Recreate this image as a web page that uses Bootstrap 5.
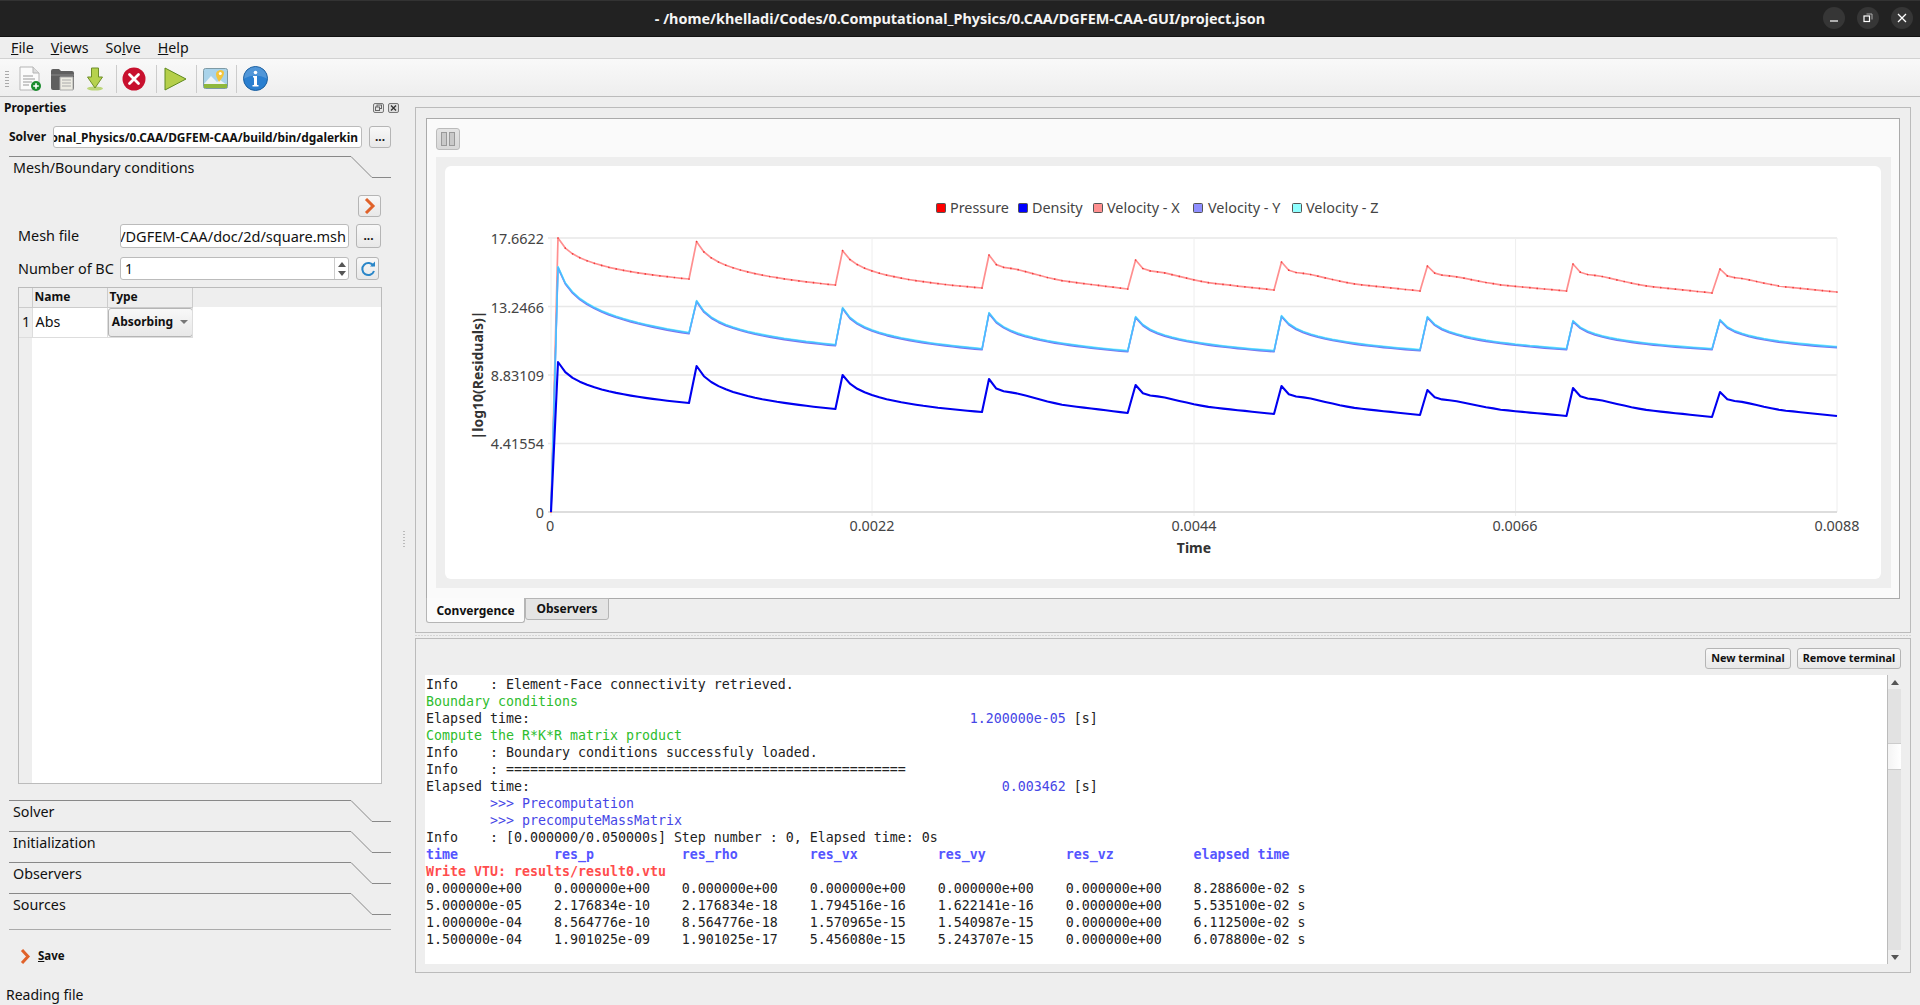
<!doctype html>
<html lang="en">
<head>
<meta charset="utf-8">
<title>DGFEM-CAA-GUI</title>
<link rel="stylesheet" href="https://cdn.jsdelivr.net/npm/bootstrap@5.3.0/dist/css/bootstrap.min.css">
<style>
html,body{height:1005px;overflow:hidden}
body{background:#eee;color:#111;font-family:"Noto Sans","Open Sans",sans-serif;font-size:13.5px;line-height:20px}
.titlebar{height:37px;background:#222;border-top:1px solid #333;border-bottom:1px solid #111;color:#f4f4f4;font-weight:700;font-size:14.4px;position:relative}
.winbtn{width:22px;height:22px;border-radius:50%;background:#363636;margin-left:12px}
.winbtns{position:absolute;right:7px;top:6px}
.menubar{height:22px;border-bottom:1px solid #d2d2d2;padding-left:11px;font-size:14.2px}
.menubar span{margin-right:17px}
.toolbar{height:38px;padding-top:2px;background:linear-gradient(#f9f9f9,#eee);border-bottom:1px solid #bbb}
.grip{width:4px;height:18px;margin:0 4px 0 5px;background-image:radial-gradient(#aaa 40%,transparent 45%);background-size:2px 3px}
.tcell{width:33px}
.tshift{margin-left:-1px;margin-right:1px}
.tshift2{margin-left:-2px;margin-right:2px}
.tsep{width:1px;height:28px;background:#ccc;margin:0 2px 0 4px}
.mainarea{height:888px}
.leftpanel{width:415px;flex:none}
.proptitle{height:22px;padding-left:4px;padding-right:16px;font-weight:700;font-size:12px}
.solverrow{margin:7px 24px 0 9px;height:22px;font-weight:700;font-size:12px}
.qfield{background:#fff;border:1px solid #bbb;border-radius:3px;overflow:hidden;white-space:nowrap;padding:0 3px;display:flex;align-items:center;justify-content:flex-end}
.qbtn{background:linear-gradient(#f8f8f8,#e8e8e8);border:1px solid #b5b5b5;border-radius:3px;padding:0;color:#111;font-weight:700;font-size:12px;line-height:1;--bs-btn-hover-bg:#eee}
.w-solverin{width:309px;margin-left:7px;font-size:11.9px}
.w-dots{width:22px;margin-left:7px}
.tbox{margin:8px 24px 0 9px}
.tabhead{height:22px}
.tabhead .htext{flex:1;border-top:1px solid #888;padding:1px 0 0 4px;font-size:14.3px;line-height:20px}
.tabhead svg{flex:none}
.tabgap{margin-top:9px}
.tabpage{height:622px;padding:17px 9px 0}
.arrowbtn{width:23px;height:22px;margin-right:1px}
.formrow{margin-top:7px;height:24px;font-size:14.4px}
.formrow.second{margin-top:9px;height:23px}
.flabel{width:102px;flex:none}
.meshin{width:229px;font-size:14.5px;padding:0 2px}
.spinin{width:229px;justify-content:space-between;padding:0 0 0 4px;font-size:14px}
.spinarrows{width:14px;height:100%;border-left:1px solid #ccc}
.smallbtn{width:25px;margin-left:7px;height:24px}
.refbtn{width:23px;height:23px;margin-left:7px}
.bctable{margin-top:7px;height:497px;border:1px solid #bbb;background:linear-gradient(to right,#eee 13px,#fff 13px)}
.bctable table{width:100%;border-collapse:collapse;table-layout:fixed}
.col-rn{width:13px}
.col-name{width:75px}
.col-type{width:85px}
.bctable thead tr{background:#eee;height:19px;font-size:12px;font-weight:700}
.bctable tbody tr{height:29px;font-size:14.3px;background:transparent}
.bctable th{padding:0 2px;border-right:1px solid #ccc;border-bottom:1px solid #ccc;line-height:16px}
.bctable th.blank{border:0}
.bctable td{padding:0 3px;background:#fff;border-right:1px solid #ddd;border-bottom:1px solid #ddd}
.bctable td.rnum{background:#eee;padding:0 0 0 3px}
.bctable td.blank{border:0;background:#fff}
.bctable td.combocell{padding:0}
.combo{width:85px;height:29px;font-size:12px;font-weight:700;display:flex;align-items:center;justify-content:center;gap:7px}
.caret{width:0;height:0;border:4px solid transparent;border-top:4px solid #777;border-bottom:0}
.endline{margin-top:14px;border-top:1px solid #aaa;height:1px}
.saverow{margin:16px 0 0 11px;font-weight:700;font-size:11.5px;height:20px}
.saverow u{text-decoration-thickness:1px}
.saverow svg{margin-right:-1px}
.rightpanel{width:1496px;padding-top:10px}
.framebox{border:1px solid #bbb}
.topframe{height:526px;padding:10px 10px 0}
.pane{height:481px;border:1px solid #aaa;background:#fafafa;padding:9px 8px 9px 9px}
.pausebtn{width:24px;height:22px;background:linear-gradient(#e4e4e4,#d8d8d8);border:1px solid #bbb;border-radius:3px;margin-bottom:7px}
.chartbox{background:#eee;padding:9px 10px 9px 9px;height:431px}
.chartcard{background:#fff;border-radius:6px;height:413px;overflow:hidden}
.chartcard svg{display:block}
.chartcard text{font-family:"Noto Sans","Open Sans",sans-serif;font-size:14.4px;fill:#444}
.chartcard text.axt{font-weight:700;fill:#333;font-size:14px}
.chartcard .gridl{stroke:#e8e8e8;stroke-width:1.5}
.chartcard .gridv{stroke:#eee;stroke-width:1}
.qtabs{border:0;font-size:12px;font-weight:700;--bs-nav-tabs-border-width:0;margin-top:-1px;align-items:flex-start}
.qtab{height:22px;width:84px;margin-left:0;background:#e4e4e4;border:1px solid #b5b5b5;border-radius:0 0 3px 3px;display:flex;align-items:center;justify-content:center}
.qtab.on{background:#fbfbfb;width:99px;height:25px;border-top:0;padding-top:2px}
.hsplit{height:5px;background-image:radial-gradient(#bbb 30%,transparent 35%);background-size:3px 3px;background-repeat:repeat-x;background-position:center}
.botframe{height:335px;padding:9px 9px 8px}
.termbtn{height:21px;font-size:10.8px;margin-left:6px}
.w-new{width:86px}
.w-rem{width:104px}
.termrow{margin-top:6px;height:289px}
.termtext{flex:1;background:#fff;margin:0;padding:1px 0 0 1px;overflow:hidden;font-family:"DejaVu Sans Mono","Liberation Mono",monospace;font-size:13.29px;line-height:17px;color:#222}
.cg{color:#2ebd2e}.cb{color:#4646e6}.cbb{color:#5555ff;font-weight:700}.cr{color:#ff4d4d;font-weight:700}
.sbar{width:14px;flex:none;background:#e2e2e2;border-left:1px solid #bbb}
.sbarbtn{height:14px;background:#eee;display:flex;align-items:center;justify-content:center}
.sup{width:0;height:0;border:4px solid transparent;border-bottom:5px solid #555;border-top:0}
.sdn{width:0;height:0;border:4px solid transparent;border-top:5px solid #555;border-bottom:0}
.sthumb{margin-top:54px;height:27px;background:linear-gradient(to right,#f4f4f4,#fff);border-top:1px solid #ccc;border-bottom:1px solid #ccc}
.statusbar{height:20px;padding-left:6px;font-size:14px;line-height:20px}
.vgrip{position:absolute;left:403px;top:530px;width:2px;height:18px;background-image:radial-gradient(#bbb 40%,transparent 45%);background-size:2px 3px}
</style>
</head>
<body class="d-flex flex-column">

<div class="titlebar d-flex align-items-center justify-content-center flex-none">
  <span>- /home/khelladi/Codes/0.Computational_Physics/0.CAA/DGFEM-CAA-GUI/project.json</span>
  <div class="winbtns d-flex">
    <div class="winbtn d-flex align-items-center justify-content-center"><svg width="10" height="10" viewBox="0 0 10 10"><path d="M1 8h8" stroke="#fff" stroke-width="1.2"/></svg></div>
    <div class="winbtn d-flex align-items-center justify-content-center"><svg width="10" height="10" viewBox="0 0 10 10"><rect x="1" y="3" width="5.5" height="5.5" fill="none" stroke="#fff" stroke-width="1.2"/><path d="M3.5 1H9v5.5" fill="none" stroke="#aaa"/></svg></div>
    <div class="winbtn d-flex align-items-center justify-content-center"><svg width="10" height="10" viewBox="0 0 10 10"><path d="M1 1l8 8M9 1l-8 8" stroke="#fff" stroke-width="1.3"/></svg></div>
  </div>
</div>

<div class="menubar d-flex align-items-center">
  <span><u>F</u>ile</span><span><u>V</u>iews</span><span>So<u>l</u>ve</span><span><u>H</u>elp</span>
</div>

<div class="toolbar d-flex align-items-center">
  <div class="grip"></div>
  <div class="tcell d-flex justify-content-center"><svg width="24" height="26" viewBox="0 0 24 26"><path d="M2 1h13l6 6v17H2z" fill="#fbfbfb" stroke="#b5b5b5"/><path d="M15 1v6h6" fill="#ddd" stroke="#b5b5b5"/><path d="M5 10h10M5 13h12M5 16h9M5 19h6" stroke="#999"/><circle cx="18" cy="20" r="5" fill="#1a8c2e"/><path d="M18 17.2v5.6M15.2 20h5.6" stroke="#fff" stroke-width="1.6"/></svg></div>
  <div class="tcell d-flex justify-content-center"><svg width="25" height="24" viewBox="0 0 25 24"><path d="M1 4q0-2 2-2h6l2 2h11q2 0 2 2v15q0 2-2 2H3q-2 0-2-2z" fill="#5f5f5f"/><path d="M1 8h23" stroke="#888"/><path d="M10 10h13v13H10z" fill="#ecebe2" stroke="#aaa"/><path d="M12 13h9M12 16h9M12 19h9" stroke="#aaa"/></svg></div>
  <div class="tcell tshift d-flex justify-content-center"><svg width="18" height="24" viewBox="0 0 18 24"><ellipse cx="9" cy="21.5" rx="8" ry="2" fill="#bcd67a"/><path d="M5.5 1h7v9h4L9 21 1.5 10h4z" fill="#b6d24e" stroke="#6f8f2a"/></svg></div>
  <div class="tsep"></div>
  <div class="tcell tshift2 d-flex justify-content-center"><svg width="24" height="24" viewBox="0 0 24 24"><circle cx="12" cy="12" r="11.5" fill="#c8102e"/><path d="M7.5 7.5l9 9M16.5 7.5l-9 9" stroke="#fff" stroke-width="2.8" stroke-linecap="round"/></svg></div>
  <div class="tsep"></div>
  <div class="tcell d-flex justify-content-center"><svg width="23" height="24" viewBox="0 0 23 24"><path d="M1 1l21 11L1 23z" fill="#b5cf4a" stroke="#5f8a1e"/></svg></div>
  <div class="tsep"></div>
  <div class="tcell d-flex justify-content-center"><svg width="25" height="21" viewBox="0 0 25 21"><rect x=".5" y=".5" width="24" height="20" rx="2" fill="#a9d3ea" stroke="#7e9aa5"/><path d="M1 16l7-8 6 6 3-2 7 5v3H1z" fill="#eef3f5"/><rect x="1" y="16" width="23" height="4" fill="#8fb83c"/><path d="M17 2q4 0 4 3t-5 9q-3-5-3-8t4-4z" fill="#f3c53c"/><circle cx="17.3" cy="5.6" r="1.5" fill="#fff"/></svg></div>
  <div class="tsep"></div>
  <div class="tcell d-flex justify-content-center"><svg width="25" height="25" viewBox="0 0 25 25"><circle cx="12.5" cy="12.5" r="12" fill="#2a7fd0" stroke="#1b5f9f"/><path d="M1 12.5a11.5 11.5 0 0 1 23 0q-11.5-6-23 0z" fill="#fff" opacity=".18"/><circle cx="12.5" cy="6.5" r="1.8" fill="#fff"/><path d="M10 10h4v9h1.5v1.5h-6V19H11v-7.5h-1z" fill="#fff"/></svg></div>
</div>

<div class="mainarea d-flex">
  <div class="leftpanel">
    <div class="proptitle d-flex align-items-center justify-content-between">
      <span>Properties</span>
      <span class="d-flex gap-1">
        <svg width="11" height="10" viewBox="0 0 11 10"><rect x=".5" y=".5" width="10" height="9" rx="1.5" fill="#e4e4e4" stroke="#777"/><rect x="4" y="2" width="4.5" height="3.5" fill="none" stroke="#666"/><rect x="2.5" y="4" width="4" height="3.5" fill="#e4e4e4" stroke="#666"/></svg>
        <svg width="11" height="10" viewBox="0 0 11 10"><rect x=".5" y=".5" width="10" height="9" rx="1.5" fill="#ddd" stroke="#777"/><path d="M3 2.5l5 5M8 2.5l-5 5" stroke="#333" stroke-width="1.3"/></svg>
      </span>
    </div>
    <div class="solverrow d-flex align-items-center">
      <span>Solver</span>
      <div class="qfield w-solverin h-100"><span>onal_Physics/0.CAA/DGFEM-CAA/build/bin/dgalerkin</span></div>
      <button class="btn qbtn w-dots h-100">...</button>
    </div>
    <div class="tbox">
      <div class="tabhead d-flex">
        <div class="htext">Mesh/Boundary conditions</div>
        <svg width="40" height="22" viewBox="0 0 40 22"><path d="M0 .5L21 21.5H40" fill="none" stroke="#888"/></svg>
      </div>
      <div class="tabpage">
        <div class="d-flex justify-content-end">
          <button class="btn qbtn arrowbtn d-flex align-items-center justify-content-center"><svg width="12" height="16" viewBox="0 0 12 16"><path d="M2 1l7 7-7 7" fill="none" stroke="#e0622a" stroke-width="3"/></svg></button>
        </div>
        <div class="formrow d-flex align-items-center">
          <span class="flabel">Mesh file</span>
          <div class="qfield meshin h-100"><span>/DGFEM-CAA/doc/2d/square.msh</span></div>
          <button class="btn qbtn smallbtn">...</button>
        </div>
        <div class="formrow second d-flex align-items-center">
          <span class="flabel">Number of BC</span>
          <div class="qfield spinin h-100"><span>1</span>
            <span class="spinarrows d-flex flex-column align-items-center justify-content-center gap-1"><span class="sup"></span><span class="sdn"></span></span>
          </div>
          <button class="btn qbtn refbtn d-flex align-items-center justify-content-center"><svg width="16" height="16" viewBox="0 0 16 16"><path d="M13.5 5A6 6 0 1 0 14 10" fill="none" stroke="#2a86c8" stroke-width="2"/><path d="M10 5.5h5v-5z" fill="#2a86c8"/></svg></button>
        </div>
        <div class="bctable">
          <table>
            <colgroup><col class="col-rn"><col class="col-name"><col class="col-type"><col></colgroup>
            <thead><tr><th></th><th>Name</th><th>Type</th><th class="blank"></th></tr></thead>
            <tbody><tr><td class="rnum">1</td><td>Abs</td><td class="combocell"><button class="btn qbtn combo">Absorbing <span class="caret"></span></button></td><td class="blank"></td></tr></tbody>
          </table>
        </div>
      </div>
      <div class="tabhead d-flex"><div class="htext">Solver</div><svg width="40" height="22" viewBox="0 0 40 22"><path d="M0 .5L21 21.5H40" fill="none" stroke="#888"/></svg></div>
      <div class="tabhead tabgap d-flex"><div class="htext">Initialization</div><svg width="40" height="22" viewBox="0 0 40 22"><path d="M0 .5L21 21.5H40" fill="none" stroke="#888"/></svg></div>
      <div class="tabhead tabgap d-flex"><div class="htext">Observers</div><svg width="40" height="22" viewBox="0 0 40 22"><path d="M0 .5L21 21.5H40" fill="none" stroke="#888"/></svg></div>
      <div class="tabhead tabgap d-flex"><div class="htext">Sources</div><svg width="40" height="22" viewBox="0 0 40 22"><path d="M0 .5L21 21.5H40" fill="none" stroke="#888"/></svg></div>
      <div class="endline"></div>
      <div class="saverow d-flex align-items-center gap-2">
        <svg width="11" height="15" viewBox="0 0 11 15"><path d="M2 1l6 6.5-6 6.5" fill="none" stroke="#e0622a" stroke-width="3"/></svg>
        <span><u>S</u>ave</span>
      </div>
    </div>
  </div>

  <div class="rightpanel">
    <div class="framebox topframe">
      <div class="pane">
        <div class="pausebtn d-flex align-items-center justify-content-center gap-1"><svg width="14" height="14" viewBox="0 0 14 14"><rect x=".5" y=".5" width="5" height="13" fill="#c9c9c9" stroke="#999"/><rect x="8.5" y=".5" width="5" height="13" fill="#c9c9c9" stroke="#999"/></svg></div>
        <div class="chartbox">
          <div class="chartcard">
            <svg id="chart" width="1436" height="413" viewBox="445 166 1436 413">
              <g class="grid">
                <path class="gridl" d="M548 238H1837M548 306.5H1837M548 375H1837M548 443.5H1837"/>
                <path class="gridv" d="M551 238V516M872 238V516M1194 238V516M1515.6 238V516M1837 238V512"/>
                <path d="M548 512H1837" stroke="#ddd" stroke-width="2"/>
              </g>
              <g id="series"></g>
              <g>
                <rect x="936.5" y="203.5" width="9" height="9" rx="1" fill="#f00" stroke="#555"/><text x="950" y="213">Pressure</text>
                <rect x="1018.5" y="203.5" width="9" height="9" rx="1" fill="#00f" stroke="#555"/><text x="1032" y="213">Density</text>
                <rect x="1093.5" y="203.5" width="9" height="9" rx="1" fill="#ff9090" stroke="#555"/><text x="1107" y="213">Velocity - X</text>
                <rect x="1193.5" y="203.5" width="9" height="9" rx="1" fill="#8f8fff" stroke="#555"/><text x="1208" y="213">Velocity - Y</text>
                <rect x="1292.5" y="203.5" width="9" height="9" rx="1" fill="#8fffff" stroke="#555"/><text x="1306" y="213">Velocity - Z</text>
              </g>
              <g text-anchor="end">
                <text x="544" y="244">17.6622</text><text x="544" y="313">13.2466</text><text x="544" y="381">8.83109</text><text x="544" y="449">4.41554</text><text x="544" y="518">0</text>
              </g>
              <g text-anchor="middle">
                <text x="550" y="531">0</text><text x="872" y="531">0.0022</text><text x="1194" y="531">0.0044</text><text x="1515" y="531">0.0066</text><text x="1837" y="531">0.0088</text>
                <text class="axt" x="1194" y="553">Time</text>
                <text class="axt" x="0" y="0" transform="translate(483 375) rotate(-90)">|log10(Residuals)|</text>
              </g>
            </svg>
          </div>
        </div>
      </div>
      <div class="nav qtabs">
        <div class="qtab on">Convergence</div>
        <div class="qtab">Observers</div>
      </div>
    </div>
    <div class="hsplit"></div>
    <div class="framebox botframe">
      <div class="d-flex justify-content-end">
        <button class="btn qbtn termbtn w-new">New terminal</button>
        <button class="btn qbtn termbtn w-rem">Remove terminal</button>
      </div>
      <div class="termrow d-flex">
<pre class="termtext">Info    : Element-Face connectivity retrieved.
<span class="cg">Boundary conditions</span>
Elapsed time:                                                       <span class="cb">1.200000e-05</span> [s]
<span class="cg">Compute the R*K*R matrix product</span>
Info    : Boundary conditions successfuly loaded.
Info    : ==================================================
Elapsed time:                                                           <span class="cb">0.003462</span> [s]
        <span class="cb">&gt;&gt;&gt; Precomputation</span>
        <span class="cb">&gt;&gt;&gt; precomputeMassMatrix</span>
Info    : [0.000000/0.050000s] Step number : 0, Elapsed time: 0s
<span class="cbb">time            res_p           res_rho         res_vx          res_vy          res_vz          elapsed time</span>
<span class="cr">Write VTU: results/result0.vtu</span>
0.000000e+00    0.000000e+00    0.000000e+00    0.000000e+00    0.000000e+00    0.000000e+00    8.288600e-02 s
5.000000e-05    2.176834e-10    2.176834e-18    1.794516e-16    1.622141e-16    0.000000e+00    5.535100e-02 s
1.000000e-04    8.564776e-10    8.564776e-18    1.570965e-15    1.540987e-15    0.000000e+00    6.112500e-02 s
1.500000e-04    1.901025e-09    1.901025e-17    5.456080e-15    5.243707e-15    0.000000e+00    6.078800e-02 s</pre>
        <div class="sbar d-flex flex-column">
          <div class="sbarbtn"><span class="sup"></span></div>
          <div class="flex-grow-1"><div class="sthumb"></div></div>
          <div class="sbarbtn"><span class="sdn"></span></div>
        </div>
      </div>
    </div>
  </div>
</div>
<div class="vgrip"></div>
<div class="statusbar">Reading file</div>

<script src="https://cdn.jsdelivr.net/npm/bootstrap@5.3.0/dist/js/bootstrap.bundle.min.js"></script>
<script>
(function(){
  var px=[558,696.6,842.6,989,1135.6,1281.5,1427.4,1573,1720];
  var vx=[689,835.4,982,1127.7,1274,1420,1566.5,1712,1837];
  var tbl=[[0,1],[.045,.73],[.1,.64],[.2,.58],[.3,.47],[.42,.34],[.53,.24],[.7,.15],[1,0]];
  function later(t){for(var i=1;i<tbl.length;i++){if(t<=tbl[i][0]){var a=tbl[i-1],b=tbl[i];return a[1]+(b[1]-a[1])*(t-a[0])/(b[0]-a[0]);}}return 0;}
  function early(t){return 1-Math.log(1+20*t)/Math.log(21);}
  function pts(py,vy,dy,sm){
    var o=[[551,512]];
    for(var i=0;i<9;i++){
      var n=Math.round((vx[i]-px[i])/7.3);
      for(var k=0;k<=n;k++){
        var t=k/n,f=(i<3||sm)?early(t):later(t);
        var x=px[i]+(vx[i]-px[i])*t;
        var y=vy[i]+(py[i]-vy[i])*f+(dy||0);
        o.push([+x.toFixed(1),+y.toFixed(1)]);
      }
    }
    return o;
  }
  var P=[238,241.7,250.7,255,260,262,266,264,269],PV=[279,285,288,289,290,291,291,293,292];
  var C=[267,301,308,313,317,316,317,321,320],CV=[333,345,349,351,351,350,349,349,347];
  var B=[362,366,375,379,385,386,390,388,392],BV=[403,409,412,413,414,415,416,417,416];
  var ns='http://www.w3.org/2000/svg',g=document.getElementById('series');
  function line(p,col,w,dots,dcol){
    var l=document.createElementNS(ns,'polyline');
    l.setAttribute('points',p.map(function(a){return a.join(',');}).join(' '));
    l.setAttribute('fill','none');l.setAttribute('stroke',col);l.setAttribute('stroke-width',w);l.setAttribute('stroke-linejoin','round');
    g.appendChild(l);
    if(dots){
      var d=document.createElementNS(ns,'path');
      d.setAttribute('d',p.map(function(a){return 'M'+a[0]+' '+a[1]+'h0';}).join(''));
      d.setAttribute('stroke',dcol);d.setAttribute('stroke-width',dots);d.setAttribute('stroke-linecap','round');
      g.appendChild(d);
    }
  }
  line(pts(P,PV),'#ff8f8f',1.7,1.7,'#f03a3a');
  line(pts(C,CV,.8,true),'#7c70f0',1.6,0);
  line(pts(C,CV,-.6,true),'#70f5ff',1.4,0);
  line(pts(C,CV,0,true),'#4cb8ff',1.5,0);
  line(pts(B,BV),'#0000f0',2.1,0);
})();
</script>
</body>
</html>
